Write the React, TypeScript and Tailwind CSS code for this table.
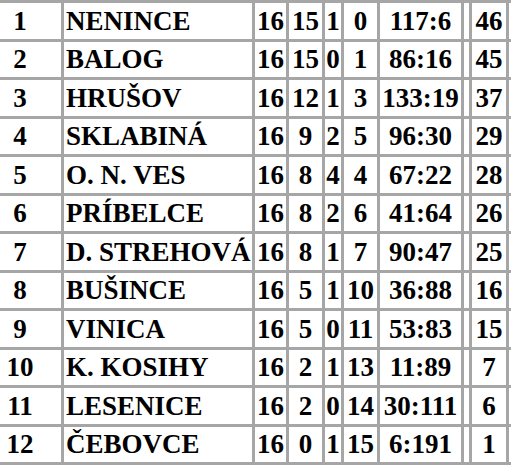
const rows: [string, string, string, string, string, string, string, string][] = [
  ['1', 'NENINCE', '16', '15', '1', '0', '117:6', '46'],
  ['2', 'BALOG', '16', '15', '0', '1', '86:16', '45'],
  ['3', 'HRUŠOV', '16', '12', '1', '3', '133:19', '37'],
  ['4', 'SKLABINÁ', '16', '9', '2', '5', '96:30', '29'],
  ['5', 'O. N. VES', '16', '8', '4', '4', '67:22', '28'],
  ['6', 'PRÍBELCE', '16', '8', '2', '6', '41:64', '26'],
  ['7', 'D. STREHOVÁ', '16', '8', '1', '7', '90:47', '25'],
  ['8', 'BUŠINCE', '16', '5', '1', '10', '36:88', '16'],
  ['9', 'VINICA', '16', '5', '0', '11', '53:83', '15'],
  ['10', 'K. KOSIHY', '16', '2', '1', '13', '11:89', '7'],
  ['11', 'LESENICE', '16', '2', '0', '14', '30:111', '6'],
  ['12', 'ČEBOVCE', '16', '0', '1', '15', '6:191', '1'],
];

export default function App() {
  return (
    <div className="h-[469px] w-[511px] overflow-hidden bg-white">
      <div
        className="-ml-[24px] grid w-max grid-cols-[82px_188px_31px_33px_16px_33px_81px_5px_34px_40px] grid-rows-[36px_35px_36px_35px_36px_35px_36px_35px_36px_35px_36px_35px] gap-[3px] bg-[#a6a6a6] p-[3px] text-[27px] font-bold leading-none text-black"
        style={{ fontFamily: '"Liberation Serif", "Times New Roman", serif' }}
      >
        {rows.map((r) => (
          <div key={r[0]} className="contents">
            <div className="flex items-center justify-center bg-white">{r[0]}</div>
            <div className="flex items-center whitespace-nowrap bg-white pl-[2px]">{r[1]}</div>
            <div className="flex items-center justify-center bg-white">{r[2]}</div>
            <div className="flex items-center justify-center bg-white">{r[3]}</div>
            <div className="flex items-center justify-center bg-white">{r[4]}</div>
            <div className="flex items-center justify-center bg-white">{r[5]}</div>
            <div className="flex items-center justify-center bg-white">{r[6]}</div>
            <div className="bg-white" />
            <div className="flex items-center justify-center bg-white">{r[7]}</div>
            <div className="bg-white" />
          </div>
        ))}
      </div>
    </div>
  );
}
